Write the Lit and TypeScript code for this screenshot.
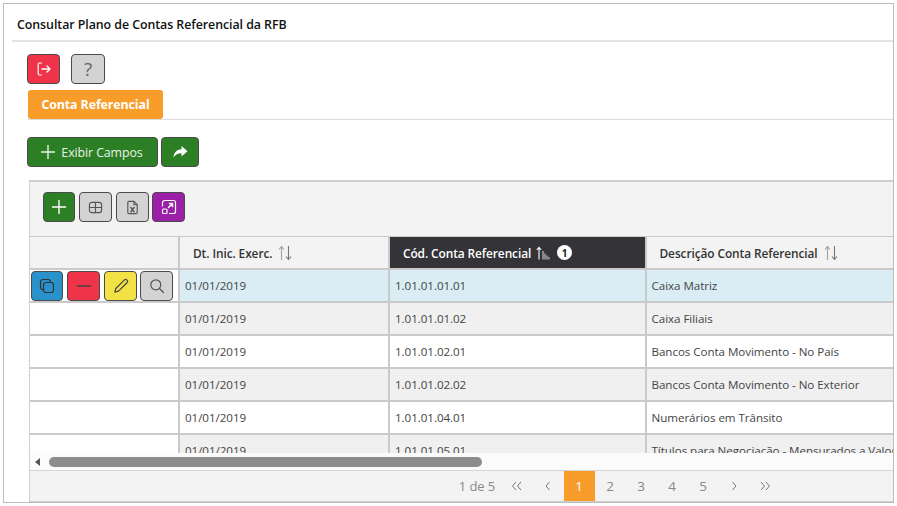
import { LitElement, html, css, svg } from "lit";
import { customElement } from "lit/decorators.js";

const rows = [
  ["01/01/2019", "1.01.01.01.01", "Caixa Matriz"],
  ["01/01/2019", "1.01.01.01.02", "Caixa Filiais"],
  ["01/01/2019", "1.01.01.02.01", "Bancos Conta Movimento - No País"],
  ["01/01/2019", "1.01.01.02.02", "Bancos Conta Movimento - No Exterior"],
  ["01/01/2019", "1.01.01.04.01", "Numerários em Trânsito"],
  ["01/01/2019", "1.01.01.05.01", "Títulos para Negociação - Mensurados a Valor Justo"],
];

const ic = (body: unknown, w = 16, h = 16) => html`<svg class="ic" width=${w} height=${h} viewBox="0 0 16 16" fill="none" stroke="currentColor" stroke-width="1.2" stroke-linecap="round" stroke-linejoin="round">${body}</svg>`;

const exit = ic(svg`<path d="M5.500 2H3.500C2.700 2 2.200 2.500 2.200 3.200v9.600c0 .7.5 1.200 1.300 1.200h2"/><path d="M6 8h8M11 5l3 3-3 3" stroke-width="1.400"/>`);
const plus = ic(svg`<path d="M8 1.500v13M1.500 8h13" stroke-width="1.400"/>`);
const share = ic(svg`<path d="M9.500 2 15.500 7.200 9.500 12.400V9.300C6 9.300 3.500 10.300 1.500 13.500c.3-4.700 3-7.900 8-8.300z" fill="currentColor" stroke="none"/>`);
const table = ic(svg`<rect x="1.500" y="2.500" width="13" height="11" rx="2.500"/><path d="M8 2.500v11M1.500 8h13"/>`, 15, 15);
const excel = ic(svg`<path d="M4 1.500h5.500L13 5v8.300c0 .7-.5 1.200-1.200 1.200H4.200c-.7 0-1.200-.5-1.200-1.200V2.700c0-.7.5-1.200 1-1.200z"/><path d="M9.500 1.500V5H13"/><path d="M6.300 8l3.400 4.500M9.700 8l-3.400 4.500" stroke-width="1.500"/>`, 15, 15);
const expand = ic(svg`<path d="M4 1.500h8.500c1.100 0 2 .9 2 2v9c0 1.100-.9 2-2 2H8.500"/><path d="M1.500 7V4c0-1.300.9-2.500 2.500-2.500"/><rect x="1.500" y="10" width="4.500" height="4.500" rx="1"/><path d="M7.500 8.500 11.500 4.500M8.500 4.500h3v3" stroke-width="1.500"/>`);
const copy = ic(svg`<rect x="1.500" y="1.500" width="10" height="10" rx="2.500"/><rect x="4.500" y="4.500" width="10" height="10" rx="2.500" fill="#2a92cb"/>`);
const minus = ic(svg`<path d="M1.500 8h13" stroke-width="1.300"/>`);
const pencil = ic(svg`<path d="M11.500 1.800c.6-.6 1.600-.6 2.200 0l.5.500c.6.6.6 1.600 0 2.200L5.500 13.200 1.800 14.200l1-3.700z"/>`);
const search = ic(svg`<circle cx="6.800" cy="6.800" r="5"/><path d="M10.500 10.500l4 4"/>`);
const sortBoth = html`<svg class="sort gapped" width="14" height="16" viewBox="0 0 14 16" fill="none" stroke="#a0a0a0" stroke-width="1.100"><path d="M3.500 15V2M1 4.500 3.500 1.500 6 4.500"/><path stroke="#777" d="M10.500 1v13M8 11.500 10.500 14.500 13 11.500"/></svg>`;
const sortAsc = html`<svg class="sort" width="14" height="14" viewBox="0 0 14 14" fill="none" stroke="#fff" stroke-width="1.100"><path d="M3 13.500V1.500M.8 4 3 1.300 5.200 4"/><path stroke="#b5b5b5" stroke-width="1.300" d="M7 5v8.500M9 7.500v6M11 9.500v4M13 11v2.500"/></svg>`;
const chev = (d: string) => html`<svg class="ic" width="12" height="10" viewBox="0 0 12 10" fill="none" stroke="#777" stroke-width="1"><path d=${d}/></svg>`;

@customElement("app-root")
export class AppRoot extends LitElement {
  static styles = css`
    :host {
      display: block;
      width: 897px;
      height: 506px;
      padding: 3px;
      box-sizing: border-box;
      background: #fff;
      font-family: "Open Sans", "Noto Sans", sans-serif;
      color: #333;
    }
    .frame {
      box-sizing: border-box;
      width: 891px;
      height: 500px;
      border: 1px solid #bdbdbd;
      padding: 0 0 0 8px;
      display: flex;
      flex-direction: column;
      overflow: hidden;
    }
    .title {
      margin-right: -1px;
      border-bottom: 2px solid #e3e3e3;
      padding: 4px 0 0 5px;
      box-sizing: content-box;
      height: 33px;
      display: flex;
      align-items: center;
      font-size: 12.400px;
      font-weight: 600;
      color: #111;
      letter-spacing: -0.06px;
    }
    .content { padding-left: 15px; display: flex; flex-direction: column; }
    .actions { display: flex; gap: 11px; margin-top: 12px; }
    .btn {
      box-sizing: border-box;
      height: 30px;
      width: 33px;
      border: 1px solid #4a4a4a;
      border-radius: 4px;
      display: flex;
      align-items: center;
      justify-content: center;
      flex: none;
    }
    .red { background: #ef3349; color: #fff; }
    .gray { background: #d3d3d3; color: #555; }
    .green { background: #2d7f26; color: #fff; }
    .purple { background: #9c1fa8; color: #fff; }
    .blue { background: #2a92cb; color: #333; }
    .yellow { background: #f2e245; color: #444; }
    .red.dark { color: #444; }
    .help { width: 34px; }
    .q { font-size: 19px; color: #666; line-height: 1; }
    .tabs { border-bottom: 1px solid #dcdcdc; height: 29px; margin-top: 6px; margin-left: 1px; }
    .tab {
      box-sizing: border-box;
      width: 135px;
      height: 29px;
      background: #f99d2a;
      color: #fff;
      font-size: 12.400px;
      font-weight: 700;
      border-radius: 3px;
      display: flex;
      align-items: center;
      justify-content: center;
      letter-spacing: -0.1px;
    }
    .tools { display: flex; gap: 3px; margin-top: 17px; }
    .wide {
      width: 131px;
      gap: 5px;
      padding-right: 2px;
      font-size: 12.400px;
      color: #e9f3e8;
      letter-spacing: -0.1px;
    }
    .share { width: 38px; }
    .grid {
      box-sizing: border-box;
      margin-top: 13px;
      margin-left: 2px;
      width: 866px;
      height: 322px;
      border: 2px solid #cfcfcf;
      border-width: 2px 0 1px 1.500px;
      display: flex;
      flex-direction: column;
      background: #f3f3f3;
      overflow: hidden;
    }
    .toolbar { height: 54px; flex: none; display: flex; align-items: flex-start; padding: 10px 0 0 13px; gap: 4px; box-sizing: border-box; }
    .btn.first { width: 32px; }
    .btn.pull { margin-left: -1px; }
    .line { display: grid; grid-template-columns: 148px 208px 254.500px 1fr; column-gap: 2px; background: #cacaca; }
    .line > div { display: flex; align-items: center; box-sizing: border-box; min-width: 0; white-space: nowrap; overflow: hidden; }
    .head { flex: none; height: 34px; padding: 1px 0 2px; box-sizing: border-box; }
    .head > div { background: #f3f3f3; font-size: 11.900px; font-weight: 600; color: #333; padding-left: 13px; gap: 5px; letter-spacing: -0.09px; }
    .head > div.sorted { background: #333338; color: #fff; }
    .sort.gapped { margin-left: 1px; }
    .badge { width: 15px; height: 15px; border-radius: 50%; background: #fff; color: #222; font-size: 10px; font-weight: 700; display: flex; align-items: center; justify-content: center; margin-left: 2px; letter-spacing: 0; }
    .body { flex: none; height: 183px; overflow: hidden; background: #fff; }
    .row { height: 33px; padding-bottom: 2px; box-sizing: border-box; font-size: 11.600px; color: #444; }
    .row > div { padding-left: 5px; background: #fff; letter-spacing: -0.05px; }
    .row > div:first-child { padding: 0 0 0 1px; gap: 4px; }
    .row.even > div:not(:first-child) { background: #f0f0f0; }
    .row.sel > div:not(:first-child) { background: #daedf4; }
    .scroll { flex: none; height: 18px; background: #fbfbfb; border-bottom: 1px solid #d5d5d5; box-sizing: border-box; display: flex; align-items: center; padding-left: 5px; gap: 9px; }
    .arrow { width: 0; height: 0; border-style: solid; border-width: 4px 5px 4px 0; border-color: transparent #555 transparent transparent; }
    .thumb { width: 433px; height: 10px; border-radius: 5px; background: #8c8c8c; }
    .pager { flex: 1; display: flex; align-items: stretch; padding-left: 428px; font-size: 13.500px; color: #888; background: #f3f3f3; }
    .pager > span { width: 31px; display: flex; align-items: center; justify-content: center; flex: none; }
    .pager .info { width: 38px; margin-right: 5.500px; font-size: 13px; letter-spacing: -0.1px; white-space: nowrap; }
    .pager .cur { background: #f99d2a; color: #fff; }
    .ic, .sort { flex: none; display: block; }
  `;

  render() {
    return html`
      <div class="frame">
        <div class="title">Consultar Plano de Contas Referencial da RFB</div>
        <div class="content">
          <div class="actions">
            <div class="btn red">${exit}</div>
            <div class="btn gray help"><span class="q">?</span></div>
          </div>
          <div class="tabs"><div class="tab">Conta Referencial</div></div>
          <div class="tools">
            <div class="btn green wide">${plus}<span>Exibir Campos</span></div>
            <div class="btn green share">${share}</div>
          </div>
          <div class="grid">
            <div class="toolbar">
              <div class="btn green first">${plus}</div>
              <div class="btn gray">${table}</div>
              <div class="btn gray">${excel}</div>
              <div class="btn purple pull">${expand}</div>
            </div>
            <div class="line head">
              <div></div>
              <div>Dt. Inic. Exerc. ${sortBoth}</div>
              <div class="sorted">Cód. Conta Referencial ${sortAsc}<span class="badge">1</span></div>
              <div>Descrição Conta Referencial ${sortBoth}</div>
            </div>
            <div class="body">
              ${rows.map((r, i) => html`
                <div class="line row ${i === 0 ? "sel" : ""} ${i % 2 === 1 ? "even" : ""}">
                  <div>${i === 0 ? html`
                    <div class="btn blue first">${copy}</div>
                    <div class="btn red dark">${minus}</div>
                    <div class="btn yellow">${pencil}</div>
                    <div class="btn gray pull">${search}</div>` : ""}</div>
                  <div>${r[0]}</div>
                  <div>${r[1]}</div>
                  <div>${r[2]}</div>
                </div>`)}
            </div>
            <div class="scroll"><span class="arrow"></span><span class="thumb"></span></div>
            <div class="pager">
              <span class="info">1 de 5</span>
              <span>${chev("M5 1 1.500 5 5 9M10 1 6.500 5 10 9")}</span>
              <span>${chev("M7.500 1 4 5 7.500 9")}</span>
              <span class="cur">1</span><span>2</span><span>3</span><span>4</span><span>5</span>
              <span>${chev("M4.500 1 8 5 4.500 9")}</span>
              <span>${chev("M2 1 5.500 5 2 9M7 1 10.500 5 7 9")}</span>
            </div>
          </div>
        </div>
      </div>
    `;
  }
}
